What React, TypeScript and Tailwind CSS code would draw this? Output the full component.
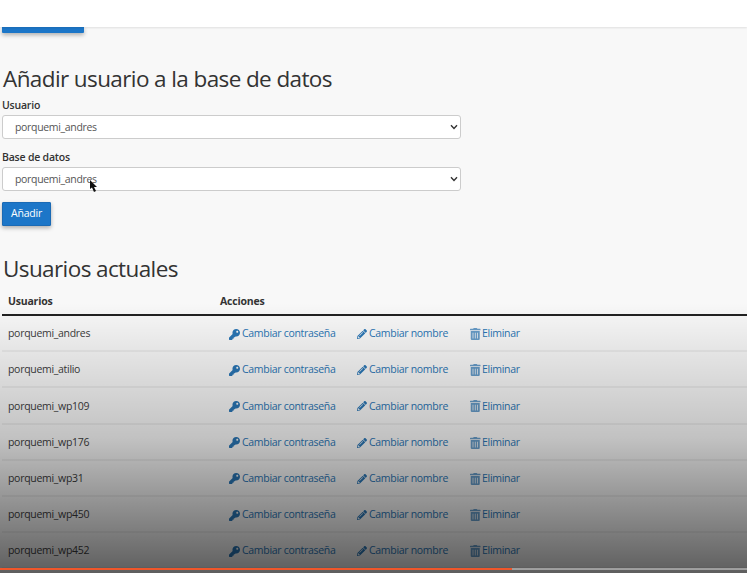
import { FaKey, FaPencilAlt, FaTrashAlt } from "react-icons/fa";

const users = [
  "porquemi_andres",
  "porquemi_atilio",
  "porquemi_wp109",
  "porquemi_wp176",
  "porquemi_wp31",
  "porquemi_wp450",
  "porquemi_wp452",
];

function Field({ label }: { label: string }) {
  return (
    <div>
      <label className="block text-[10.5px] font-semibold leading-[14px] tracking-[-0.2px] text-[#333]">{label}</label>
      <div className="relative mt-[3px] w-[459px]">
        <select className="block h-[24px] w-full appearance-none rounded-[3px] border border-[#ccc] bg-white pl-[12px] pt-[2px] text-[10.5px] tracking-[-0.33px] text-[#555] outline-none">
          <option>porquemi_andres</option>
        </select>
        <svg className="absolute right-[3px] top-[9px]" width="8" height="6" viewBox="0 0 8 6" fill="none">
          <path d="M1 1.2 L4 4.4 L7 1.2" stroke="#333" strokeWidth="1.4" />
        </svg>
      </div>
    </div>
  );
}

export default function App() {
  return (
    <div className="relative h-[573px] w-[747px] overflow-hidden bg-[#f8f8f8] font-['Open_Sans',sans-serif] text-[#333]">
      <div className="relative z-10 h-[27px] bg-white shadow-[0_1px_2px_rgba(0,0,0,0.1)]" />
      <div className="ml-[2px] h-[6px] w-[82px] rounded-b-[1px] bg-[#1c76c8] shadow-[0_2px_4px_rgba(0,0,0,0.3)]" />

      <div className="pl-[3px]">
        <h2 className="mt-[31px] text-[22.5px] leading-[30px] tracking-[-0.6px] text-[#333]">Añadir usuario a la base de datos</h2>
      </div>
      <div className="pl-[2px]">
        <div className="mt-[4px] flex flex-col gap-[11px]">
          <Field label="Usuario" />
          <Field label="Base de datos" />
        </div>
        <button className="mt-[11px] block h-[24px] w-[49px] rounded-[1px] border border-[#1a6ab5] bg-[#1c76c8] text-[10.5px] tracking-[-0.2px] text-white shadow-[0_2px_4px_rgba(0,0,0,0.3)]">
          Añadir
        </button>
      </div>
      <div className="pl-[3px]">
        <h2 className="mt-[28px] text-[22.5px] leading-[30px] tracking-[-0.6px] text-[#333]">Usuarios actuales</h2>
      </div>

      <div className="mt-[10px] pl-[2px]">
        <div className="flex h-[22px] border-b-2 border-[#222] text-[10.5px] font-bold leading-[14px] text-[#333]">
          <div className="w-[218px] pl-[6px] tracking-[-0.2px]">Usuarios</div>
          <div className="tracking-[-0.2px]">Acciones</div>
        </div>
        {users.map((user) => (
          <div key={user} className="flex h-[36.2px] items-center border-b-2 border-[#ececec] pt-[2px] text-[10.5px] tracking-[-0.3px]">
            <div className="w-[227px] pl-[6px] text-[#3c3c3c]">{user}</div>
            <div className="flex items-center text-[#2a76b5]">
              <span className="flex w-[128px] items-center gap-[2px]">
                <FaKey className="h-[11px] w-[11px]" />
                Cambiar contraseña
              </span>
              <span className="flex w-[113px] items-center gap-[2px]">
                <FaPencilAlt className="h-[10px] w-[10px]" />
                Cambiar nombre
              </span>
              <span className="flex items-center gap-[1.5px]">
                <FaTrashAlt className="h-[12px] w-[10.5px] opacity-70" />
                Eliminar
              </span>
            </div>
          </div>
        ))}
      </div>

      {/* player overlay */}
      <div className="pointer-events-none absolute inset-x-0 bottom-0 h-[270px] bg-gradient-to-b from-transparent via-[rgba(0,0,0,0.22)] to-[rgba(0,0,0,0.62)]" />
      <div className="absolute bottom-[3px] left-0 flex h-[2px] w-full">
        <div className="w-[512px] bg-[#f0562a]" />
        <div className="flex-1 bg-[rgba(255,255,255,0.4)]" />
      </div>
      <svg className="absolute left-[89px] top-[180px]" width="9" height="13" viewBox="0 0 9 13">
        <path d="M1 0 L1 9 L3 7.5 L5 12 L7 11 L5 7 L8 7 Z" fill="#111" />
      </svg>
    </div>
  );
}
